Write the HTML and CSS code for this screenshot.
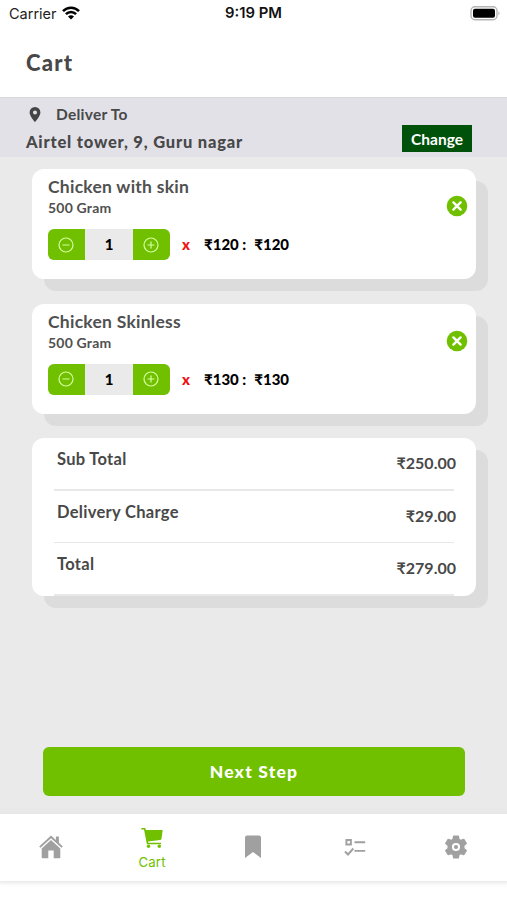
FILE: index.html
```html
<!DOCTYPE html>
<html lang="en">
<head>
<meta charset="utf-8">
<title>Cart</title>
<link rel="stylesheet" href="styles.css">
</head>
<body>
<div class="screen">
  <div class="status">
    <div class="carrier"><span>Carrier</span>
      <svg width="18" height="14" viewBox="0 0 18 14" fill="none" stroke="#000" stroke-width="2.5"><path d="M1 5.2C5.5.5 12.500.5 17 5.200M3.900 8.200C6.800 5.200 11.200 5.200 14.100 8.200"/><path d="M9 13.600L6 10.500Q9 8 12 10.500Z" fill="#000" stroke="none"/></svg>
    </div>
    <span class="clock">9:19 PM</span>
    <svg class="battery" width="31" height="15" viewBox="0 0 31 15"><rect x="1" y=".8" width="26" height="13" rx="4" fill="#fff" stroke="#b5b5b5" stroke-width="1.400"/><rect x="3" y="2.800" width="22" height="9" rx="2" fill="#000"/><path d="M28.500 5Q30.500 7.300 28.500 9.600Z" fill="#aaa"/></svg>
  </div>
  <header class="title"><h1>Cart</h1></header>
  <section class="address">
    <div class="where">
      <div class="deliver"><svg width="12" height="15" viewBox="0 0 12 15"><path fill="#444" fill-rule="evenodd" d="M6 0a5.400 5.400 0 0 1 5.400 5.400C11.400 9.200 6 15 6 15S.6 9.200.6 5.400A5.400 5.400 0 0 1 6 0ZM6 3.400a2 2 0 1 0 0 4 2 2 0 0 0 0-4Z"/></svg><span>Deliver To</span></div>
      <div class="street">Airtel tower, 9, Guru nagar</div>
    </div>
    <button class="change">Change</button>
  </section>
  <main>
    <article class="card item">
      <div class="info">
        <h2>Chicken with skin</h2>
        <p class="weight">500 Gram</p>
        <div class="line">
          <div class="stepper">
            <button><svg width="16" height="16" viewBox="0 0 16 16"><circle cx="8" cy="8" r="7"/><path d="M4.500 8h7"/></svg></button>
            <span>1</span>
            <button><svg width="16" height="16" viewBox="0 0 16 16"><circle cx="8" cy="8" r="7"/><path d="M4.500 8h7M8 4.500v7"/></svg></button>
          </div>
          <span class="times">x</span><span class="price">₹120 :</span><span class="price sum">₹120</span>
        </div>
      </div>
      <svg class="remove" width="22" height="22" viewBox="0 0 22 22"><circle cx="11" cy="11" r="10.300"/><path d="M7.400 7.400l7.200 7.200M14.600 7.400l-7.200 7.200"/></svg>
    </article>
    <article class="card item">
      <div class="info">
        <h2>Chicken Skinless</h2>
        <p class="weight">500 Gram</p>
        <div class="line">
          <div class="stepper">
            <button><svg width="16" height="16" viewBox="0 0 16 16"><circle cx="8" cy="8" r="7"/><path d="M4.500 8h7"/></svg></button>
            <span>1</span>
            <button><svg width="16" height="16" viewBox="0 0 16 16"><circle cx="8" cy="8" r="7"/><path d="M4.500 8h7M8 4.500v7"/></svg></button>
          </div>
          <span class="times">x</span><span class="price">₹130 :</span><span class="price sum">₹130</span>
        </div>
      </div>
      <svg class="remove" width="22" height="22" viewBox="0 0 22 22"><circle cx="11" cy="11" r="10.300"/><path d="M7.400 7.400l7.200 7.200M14.600 7.400l-7.200 7.200"/></svg>
    </article>
    <section class="card totals">
      <div class="row"><span>Sub Total</span><b>₹250.00</b></div>
      <div class="row"><span>Delivery Charge</span><b>₹29.00</b></div>
      <div class="row"><span>Total</span><b>₹279.00</b></div>
    </section>
    <button class="next">Next Step</button>
  </main>
  <nav>
    <a><svg width="24" height="24" viewBox="0 0 24 24" fill="#a0a0a0"><path d="M12 .5L.2 11.400l1.300 1.400L12 3.200l10.500 9.600 1.300-1.400-3.900-3.600V1.500h-3v3.600Z"/><path d="M12 5L2.700 13.400V22.500q0 .8.800.8H9.300V15.500h5.400v7.800h5.800q.8 0 .8-.8V13.400Z"/></svg></a>
    <a class="active"><svg width="22" height="20" viewBox="0 0 22 20" fill="#70c000"><path d="M.3 0H4.200l.7 2H21.700L20.500 10.700q-.2 1.300-1.500 1.400L7 13.400l.3 1.400H20v1.500H5.900L3 1.600H.3Z"/><circle cx="7.500" cy="18.200" r="1.700"/><circle cx="18.300" cy="18.200" r="1.700"/></svg><span>Cart</span></a>
    <a><svg width="18" height="24" viewBox="0 0 18 24" fill="#a0a0a0"><path d="M1 2.500Q1 .5 3 .5H15Q17 .5 17 2.500V23L9 17 1 23Z"/></svg></a>
    <a><svg width="22" height="18" viewBox="0 0 22 18" fill="none" stroke="#a0a0a0" stroke-width="1.900"><path d="M2.400 2h4.500v4.500H2.400ZM10.500 4.300h10.700M10.500 12.900h10.700M1 13.500l3 3 5.300-6"/></svg></a>
    <a><svg width="24" height="24" viewBox="0 0 24 24" fill="none"><path fill="#a0a0a0" stroke="#a0a0a0" stroke-width="1.400" stroke-linejoin="round" d="M9.700 1.200h4.600l.6 3.100 2 1.200 3-1 2.300 3.900-2.400 2.100v3l2.400 2.100-2.300 3.900-3-1-2 1.200-.6 3.100H9.700l-.6-3.100-2-1.200-3 1-2.300-3.900 2.400-2.100v-3L1.800 8.400l2.300-3.900 3 1 2-1.200Z"/><circle cx="12" cy="12" r="3.100" stroke="#fff" stroke-width="2"/></svg></a>
  </nav>
</div>
</body>
</html>
```
FILE: styles.css
```css
* { box-sizing: border-box; }
body { margin: 0; background: #fff; font-family: Lato, "Liberation Sans", sans-serif; color: #484848; }
h1, h2, p { margin: 0; }
button { border: 0; padding: 0; font: inherit; color: inherit; }
svg { display: block; flex: none; }
.screen { width: 507px; height: 900px; display: flex; flex-direction: column; overflow: hidden; }
.status { height: 28px; display: grid; grid-template-columns: 1fr auto 1fr; align-items: center; padding: 0 6px 2px 9px; font-family: Inter, sans-serif; font-size: 14.500px; color: #222; }
.carrier { display: flex; align-items: center; gap: 5px; }
.clock { font-weight: 600; font-size: 14.800px; color: #111; margin-right: 3px; }
.battery { justify-self: end; }
.title { height: 69px; padding: 22px 26px 0; }
h1 { font-size: 22px; line-height: 26px; font-weight: 900; letter-spacing: 1.200px; }
.address { height: 60px; background: #e2e1e8; border-top: 1px solid #d8d8dc; display: flex; justify-content: space-between; padding: 0 35px 0 26px; }
.where { padding-top: 5px; }
.deliver { display: flex; align-items: center; gap: 15px; padding-left: 3px; height: 22px; font-size: 15.500px; font-weight: 700; letter-spacing: .25px; }
.street { margin-top: 6px; line-height: 22px; font-size: 16.500px; font-weight: 900; letter-spacing: .8px; white-space: nowrap; }
.change { margin-top: 27px; width: 70px; height: 27px; background: #00510a; color: #fff; font-size: 15.500px; font-weight: 700; }
main { height: 657px; background: #eaeaea; padding: 12px 31px 0 32px; }
.card { background: #fff; border-radius: 12px; box-shadow: 12px 12px 0 #dcdcdc; }
.item { height: 110px; margin-bottom: 24.500px; padding: 7px 8px 0 16px; display: flex; justify-content: space-between; }
h2 { font-size: 17.500px; line-height: 22px; font-weight: 700; letter-spacing: .25px; color: #505050; white-space: nowrap; }
.weight { font-size: 14px; line-height: 20px; font-weight: 700; letter-spacing: .2px; color: #505050; }
.line { display: flex; align-items: center; margin-top: 11px; height: 31px; color: #000; font-weight: 900; font-size: 15px; }
.line > span { padding-bottom: 1px; }
.stepper { display: flex; width: 122px; height: 31px; border-radius: 6px; overflow: hidden; background: #eaeaea; }
.stepper button { width: 37px; background: #70c000; display: grid; place-items: center; padding-right: 1px; }
.stepper span { flex: 1; text-align: center; line-height: 30px; }
.stepper svg { fill: none; stroke: #d5ffa0; stroke-width: 1.200; }
.times { color: #f01010; margin-left: 12px; width: 22px; }
.sum { margin-left: 8px; }
.remove { margin-top: 19px; fill: #70c000; stroke: #fff; stroke-width: 2.400; stroke-linecap: round; }
.remove circle { stroke: none; }
.totals { height: 157.500px; padding: 0 20px 0 22px; }
.row { position: relative; height: 52.500px; display: flex; justify-content: space-between; padding: 10px 0 0 3px; font-size: 16.500px; line-height: 22px; font-weight: 700; letter-spacing: .3px; }
.row::after { content: ""; position: absolute; left: 0; right: 2px; bottom: 0; height: 1.500px; background: #e8e8e8; }
.row b { padding-top: 4px; font-weight: 700; font-size: 16px; letter-spacing: 0; }
.next { display: block; width: 422px; height: 49px; margin: 151px 0 0 11px; border-radius: 6px; background: #70c000; color: #fff; font-size: 17.500px; font-weight: 900; letter-spacing: 1.200px; }
nav { height: 67px; display: grid; grid-template-columns: repeat(5, 1fr); box-shadow: 0 0 4px 2px #e6e6e6; background: #fff; }
nav a { display: flex; flex-direction: column; align-items: center; justify-content: center; padding-bottom: 2px; }
nav .active { color: #70c000; font-family: Inter, sans-serif; font-size: 13.200px; gap: 5px; line-height: 18px; padding: 4px 0 0; letter-spacing: .2px; }
```
